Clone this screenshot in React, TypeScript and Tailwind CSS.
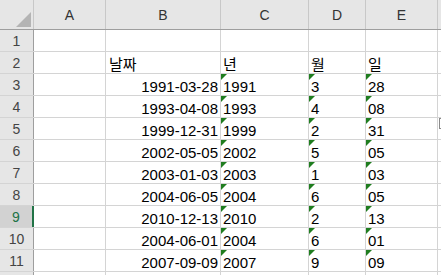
const cols = [
  { key: 'A', w: 'w-[72px]' },
  { key: 'B', w: 'w-[115px]' },
  { key: 'C', w: 'w-[88px]' },
  { key: 'D', w: 'w-[57px]' },
  { key: 'E', w: 'w-[72px]' },
]

const rows: { b: string; c: string; d: string; e: string }[] = [
  { b: '1991-03-28', c: '1991', d: '3', e: '28' },
  { b: '1993-04-08', c: '1993', d: '4', e: '08' },
  { b: '1999-12-31', c: '1999', d: '2', e: '31' },
  { b: '2002-05-05', c: '2002', d: '5', e: '05' },
  { b: '2003-01-03', c: '2003', d: '1', e: '03' },
  { b: '2004-06-05', c: '2004', d: '6', e: '05' },
  { b: '2010-12-13', c: '2010', d: '2', e: '13' },
  { b: '2004-06-01', c: '2004', d: '6', e: '01' },
  { b: '2007-09-09', c: '2007', d: '9', e: '09' },
]

function TextCell({ w, text }: { w: string; text: string }) {
  return (
    <div className={`${w} relative flex h-full shrink-0 items-end border-r border-[#d4d4d4] pb-[1px] pl-[2px]`}>
      <span className="absolute left-0 top-0 h-0 w-0 border-r-[6px] border-t-[6px] border-r-transparent border-t-[#1f7d1f]" />
      {text}
    </div>
  )
}

function RowHeader({ n, selected }: { n?: number; selected?: boolean }) {
  return (
    <div
      className={
        selected
          ? 'flex h-full w-[34px] shrink-0 items-center justify-center border-r-2 border-[#217346] bg-[#d2d2d2] text-[14px] text-[#217346]'
          : 'flex h-full w-[34px] shrink-0 items-center justify-center border-r border-[#9e9e9e] bg-[#e6e6e6] text-[14px] text-[#444]'
      }
    >
      {n}
    </div>
  )
}

export default function App() {
  return (
    <div className="relative h-[275px] w-[441px] overflow-hidden bg-white font-['Liberation_Sans','Noto_Sans_CJK_KR',sans-serif] text-[15px] leading-none text-black">
      {/* column headers */}
      <div className="flex h-[30px] border-b border-[#9e9e9e] bg-[#e6e6e6]">
        <div className="relative w-[34px] shrink-0 border-r border-[#c8c8c8]">
          <span className="absolute left-[16px] top-[12px] h-0 w-0 border-b-[15px] border-l-[15px] border-b-[#b4b4b4] border-l-transparent" />
        </div>
        {cols.map((c) => (
          <div
            key={c.key}
            className={`${c.w} flex shrink-0 items-center justify-center border-r border-[#c8c8c8] pt-[1px] text-[14px] text-[#333]`}
          >
            {c.key}
          </div>
        ))}
        <div className="flex-1" />
      </div>

      {/* row 1 */}
      <div className="flex h-[22px] border-b border-[#d4d4d4]">
        <RowHeader n={1} />
        {cols.map((c) => (
          <div key={c.key} className={`${c.w} shrink-0 border-r border-[#d4d4d4]`} />
        ))}
        <div className="flex-1" />
      </div>

      {/* row 2 */}
      <div className="flex h-[22px] border-b border-[#d4d4d4]">
        <RowHeader n={2} />
        <div className="w-[72px] shrink-0 border-r border-[#d4d4d4]" />
        <div className="flex w-[115px] shrink-0 items-end border-r border-[#d4d4d4] pb-[1px] pl-[3px]">날짜</div>
        <div className="flex w-[88px] shrink-0 items-end border-r border-[#d4d4d4] pb-[1px] pl-[2px]">년</div>
        <div className="flex w-[57px] shrink-0 items-end border-r border-[#d4d4d4] pb-[1px] pl-[2px]">월</div>
        <div className="flex w-[72px] shrink-0 items-end border-r border-[#d4d4d4] pb-[1px] pl-[2px]">일</div>
        <div className="flex-1" />
      </div>

      {rows.map((r, i) => (
        <div key={i} className="flex h-[22px] border-b border-[#d4d4d4]">
          <RowHeader n={i + 3} selected={i + 3 === 9} />
          <div className="w-[72px] shrink-0 border-r border-[#d4d4d4]" />
          <div className="flex w-[115px] shrink-0 items-end justify-end border-r border-[#d4d4d4] pb-[1px] pr-[2px]">
            {r.b}
          </div>
          <TextCell w="w-[88px]" text={r.c} />
          <TextCell w="w-[57px]" text={r.d} />
          <TextCell w="w-[72px]" text={r.e} />
          <div className="flex-1" />
        </div>
      ))}

      {/* row 12, only its top edge is in view */}
      <div className="flex h-[22px]">
        <RowHeader />
        {cols.map((c) => (
          <div key={c.key} className={`${c.w} shrink-0 border-r border-[#d4d4d4]`} />
        ))}
      </div>

      {/* clipped edge marker on the right */}
      <span className="absolute left-[439px] top-[118px] h-[11px] w-[4px] border border-[#8a8a8a]" />
    </div>
  )
}
